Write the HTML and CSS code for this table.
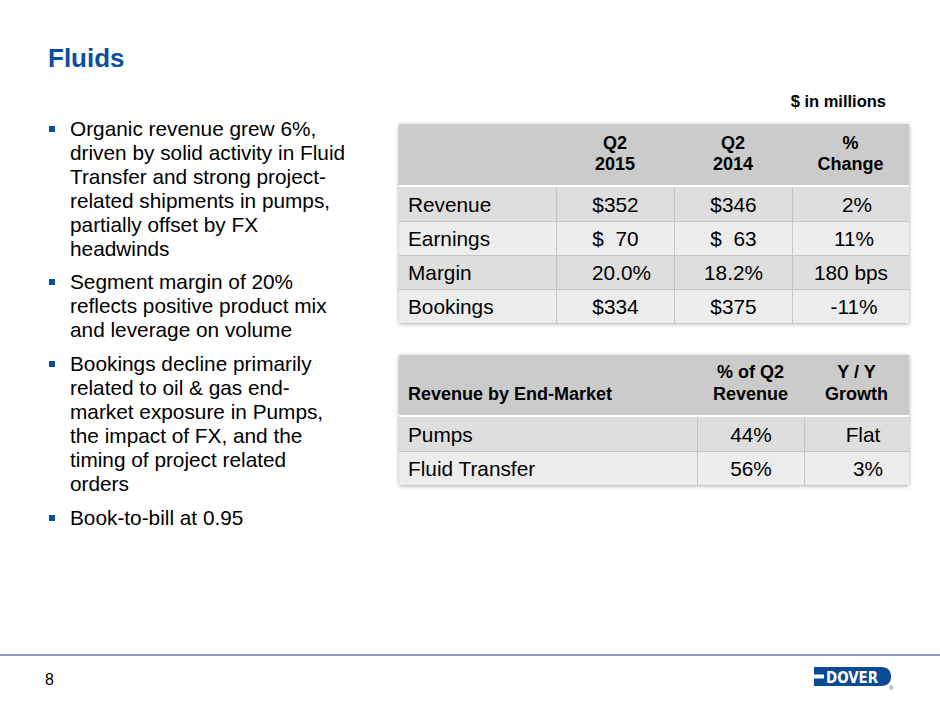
FILE: index.html
```html
<!DOCTYPE html>
<html lang="en">
<head>
<meta charset="utf-8">
<title>Fluids</title>
<link rel="stylesheet" href="styles.css">
</head>
<body>
<div class="slide">
  <h1 class="title">Fluids</h1>
  <div class="content">
    <ul class="bullets">
      <li><span>Organic revenue grew 6%,<br>driven by solid activity in Fluid<br>Transfer and strong project-<br>related shipments in pumps,<br>partially offset by FX<br>headwinds</span></li>
      <li><span>Segment margin of 20%<br>reflects positive product mix<br>and leverage on volume</span></li>
      <li><span>Bookings decline primarily<br>related to oil &amp; gas end-<br>market exposure in Pumps,<br>the impact of FX, and the<br>timing of project related<br>orders</span></li>
      <li><span>Book-to-bill at 0.95</span></li>
    </ul>
    <div class="tables">
      <div class="units">$ in millions</div>
      <table class="grid fin">
        <colgroup>
          <col class="c-label1"><col class="c-num1"><col class="c-num1"><col class="c-num2">
        </colgroup>
        <thead>
          <tr><th></th><th>Q2<br>2015</th><th>Q2<br>2014</th><th>%<br>Change</th></tr>
        </thead>
        <tbody>
          <tr class="odd"><td class="label">Revenue</td><td>$352</td><td>$346</td><td class="shift">2%</td></tr>
          <tr class="even"><td class="label">Earnings</td><td class="pre">$  70</td><td class="pre">$  63</td><td class="shift-s">11%</td></tr>
          <tr class="odd"><td class="label">Margin</td><td class="shift">20.0%</td><td>18.2%</td><td>180 bps</td></tr>
          <tr class="even"><td class="label">Bookings</td><td>$334</td><td>$375</td><td class="shift-s">-11%</td></tr>
        </tbody>
      </table>
      <table class="grid market">
        <colgroup>
          <col class="c-label2"><col class="c-pct"><col class="c-growth">
        </colgroup>
        <thead>
          <tr><th class="label">Revenue by End-Market</th><th>% of Q2<br>Revenue</th><th>Y / Y<br>Growth</th></tr>
        </thead>
        <tbody>
          <tr class="odd"><td class="label">Pumps</td><td>44%</td><td class="shift">Flat</td></tr>
          <tr class="even"><td class="label">Fluid Transfer</td><td>56%</td><td class="shift-l">3%</td></tr>
        </tbody>
      </table>
    </div>
  </div>
  <footer class="footer">
    <span class="page">8</span>
    <svg class="logo" width="82" height="26" viewBox="0 0 82 26" aria-label="Dover">
      <path d="M1,2 H68 C75,2 78,6 78,11.5 C78,17 75,21 68,21 H1 Z" fill="#0b4a94"/>
      <rect x="1" y="9.5" width="10" height="4" fill="#ffffff"/>
      <text x="13" y="17.6" class="logo-text" textLength="52" lengthAdjust="spacingAndGlyphs">DOVER</text>
      <text x="76" y="25" class="logo-reg">®</text>
    </svg>
  </footer>
</div>
</body>
</html>
```
FILE: styles.css
```css
html, body {
  margin: 0;
  padding: 0;
  background: #ffffff;
}

body {
  font-family: "Liberation Sans", Arial, Helvetica, sans-serif;
  color: #000000;
}

.slide {
  width: 940px;
  height: 705px;
  display: flex;
  flex-direction: column;
  overflow: hidden;
}

.title {
  margin: 43px 0 0 48px;
  font-size: 26px;
  line-height: 30px;
  font-weight: bold;
  color: #0b4f9c;
}

.content {
  flex: 1;
  display: flex;
  padding-left: 48px;
}

.bullets {
  list-style: none;
  margin: 44px 0 0 0;
  padding: 0;
  width: 351px;
  font-size: 20.8px;
  line-height: 24px;
}

.bullets li {
  display: flex;
  margin-bottom: 10px;
  white-space: nowrap;
}

.bullets li:first-child {
  margin-bottom: 9px;
}

.bullets li::before {
  content: "";
  flex: none;
  width: 6px;
  height: 6px;
  background: #0b4f9c;
  margin: 9px 15px 0 1px;
}

.tables {
  width: 510px;
  padding-top: 18px;
  display: flex;
  flex-direction: column;
}

.units {
  font-size: 16.5px;
  line-height: 20px;
  font-weight: bold;
  text-align: right;
  padding-right: 23px;
  margin-bottom: 13px;
}

.grid {
  width: 510px;
  table-layout: fixed;
  border-collapse: separate;
  border-spacing: 0;
  box-shadow: 0 1px 4px rgba(0, 0, 0, 0.35);
}

.c-label1 { width: 157px; }
.c-num1 { width: 118px; }
.c-num2 { width: 117px; }
.c-label2 { width: 298px; }
.c-pct { width: 107px; }
.c-growth { width: 105px; }

.grid th {
  background: #cbcbcb;
  font-size: 18px;
  line-height: 21px;
  font-weight: bold;
  text-align: center;
  padding: 0;
  border-bottom: 2px solid #ffffff;
}

.fin th {
  height: 63px;
  vertical-align: middle;
  padding-bottom: 2px;
  box-sizing: border-box;
}

.market {
  margin-top: 32px;
}

.market th {
  height: 62px;
  vertical-align: bottom;
  padding-bottom: 10px;
  box-sizing: border-box;
  line-height: 22px;
}

.grid td {
  font-size: 20.8px;
  line-height: 23px;
  height: 34px;
  padding: 0;
  text-align: center;
  vertical-align: middle;
  box-sizing: border-box;
  border-left: 1px solid #c6c6c6;
  border-top: 1px solid #c6c6c6;
}

.grid tbody tr:first-child td {
  border-top: none;
}

.grid .label {
  text-align: left;
  padding-left: 9px;
  border-left: none;
}

.grid tr.odd td {
  background: #dedede;
}

.grid tr.even td {
  background: #ececec;
}

.grid td.pre {
  white-space: pre;
}

.grid td.shift {
  padding-left: 12px;
}

.grid td.shift-s {
  padding-left: 6px;
}

.grid td.shift-l {
  padding-left: 22px;
}

.footer {
  height: 49px;
  border-top: 2px solid #8b9cc6;
  display: flex;
  align-items: center;
  justify-content: space-between;
  padding: 0 45px 0 45px;
}

.page {
  font-size: 16px;
  line-height: 20px;
  margin-top: -2px;
}

.logo {
  display: block;
  margin-top: -5px;
}

.logo-text {
  font-family: "Liberation Sans Narrow", "DejaVu Sans Condensed", "Liberation Sans", sans-serif;
  font-weight: bold;
  font-size: 16px;
  fill: #ffffff;
}

.logo-reg {
  font-family: "Liberation Sans", sans-serif;
  font-size: 6px;
  fill: #0b4a94;
}
```
